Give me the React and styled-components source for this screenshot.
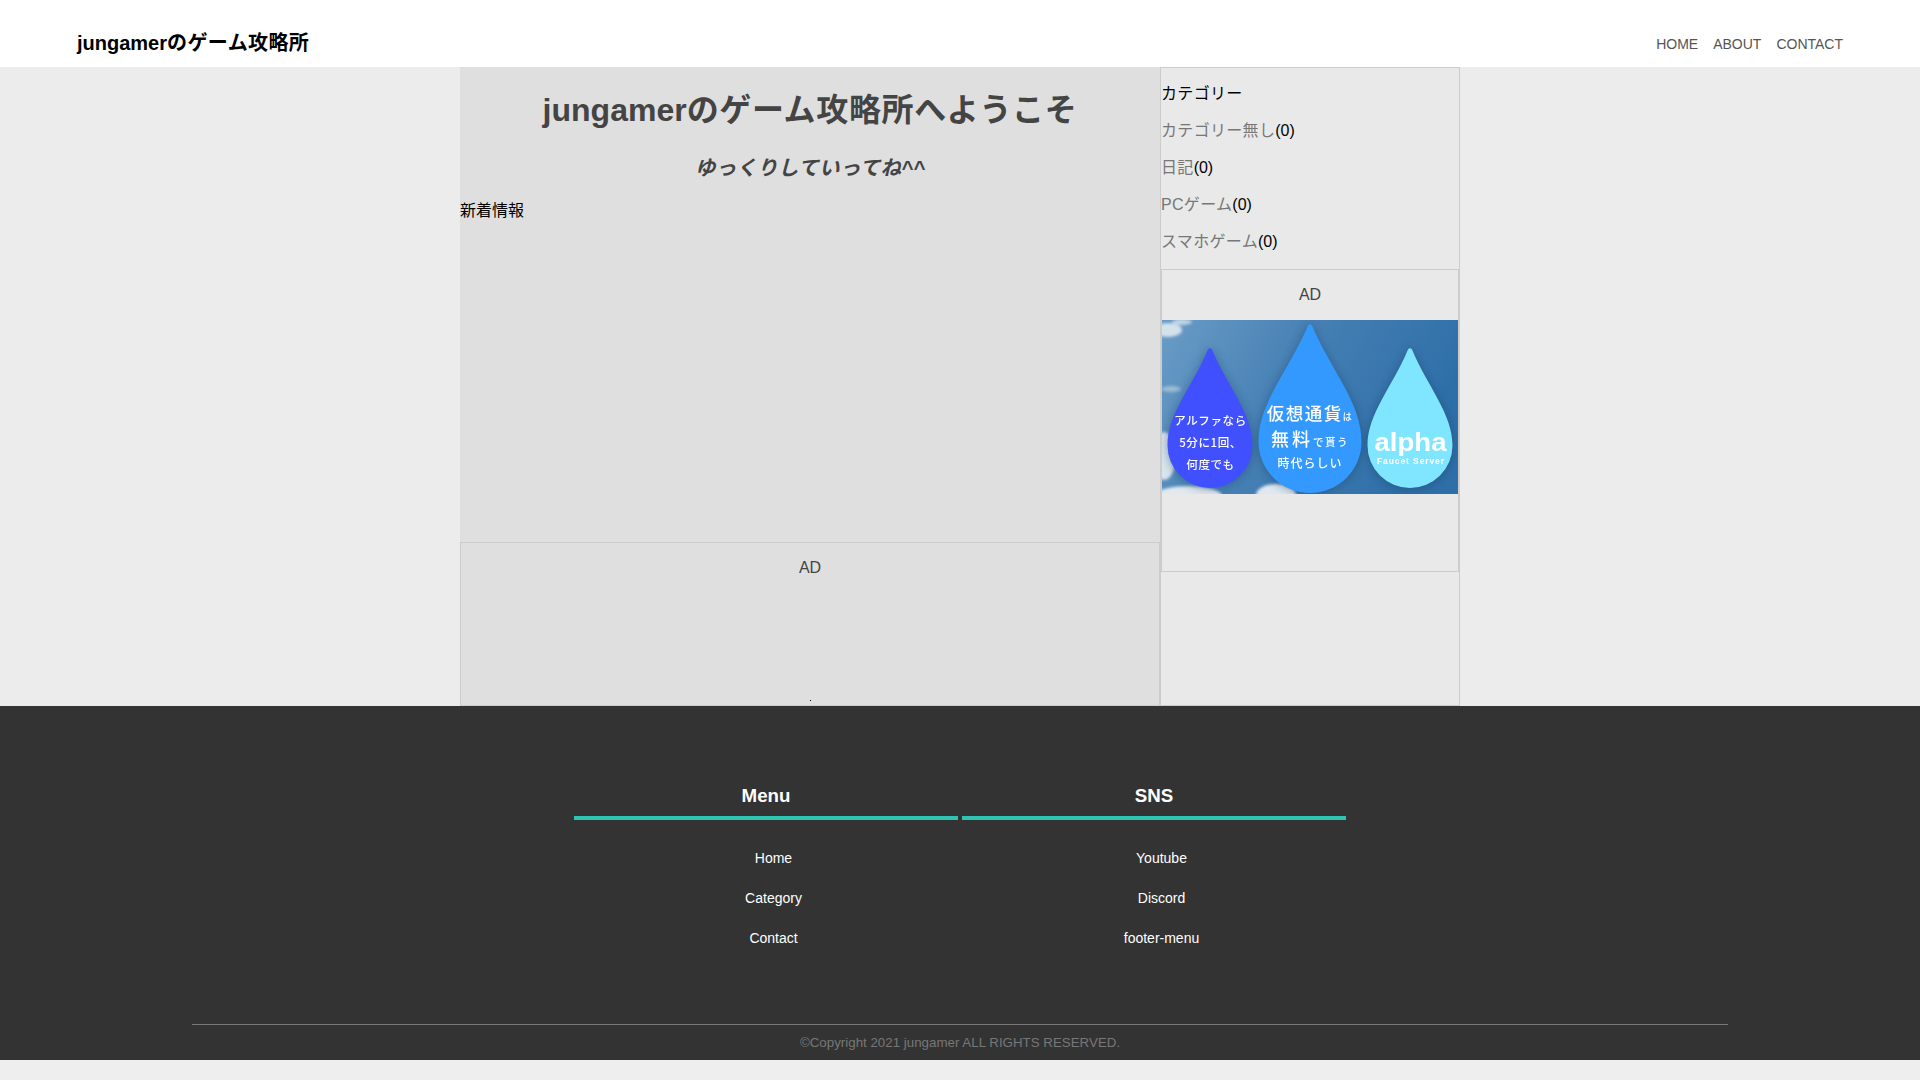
import React from 'react'
import styled, { createGlobalStyle } from 'styled-components'

const FONT = '"Liberation Sans", "Noto Sans CJK JP", sans-serif'

const categories = ['カテゴリー無し', '日記', 'PCゲーム', 'スマホゲーム']
const menuLinks = ['Home', 'Category', 'Contact']
const snsLinks = ['Youtube', 'Discord', 'footer-menu']
const navLinks = ['HOME', 'ABOUT', 'CONTACT']

// builds a water drop from the tip, the bottom and the half width
const dropPath = (cx, top, bottom, r) => {
  const mid = bottom - r
  const h = bottom - top
  return `M${cx - 2} ${top + 1.5} Q${cx} ${top - 1} ${cx + 2} ${top + 1.5}
    C${cx + r * 0.42} ${top + h * 0.28} ${cx + r} ${mid - r * 0.75} ${cx + r} ${mid}
    A${r} ${r} 0 0 1 ${cx - r} ${mid}
    C${cx - r} ${mid - r * 0.75} ${cx - r * 0.42} ${top + h * 0.28} ${cx - 2} ${top + 1.5} Z`
}

function Banner() {
  return (
    <BannerSvg viewBox="0 0 296 174" width="296" height="174">
      <defs>
        <linearGradient id="sky" x1="0" y1="0" x2="1" y2="0.3">
          <stop offset="0" stopColor="#6a9cc6" />
          <stop offset="0.5" stopColor="#457fb3" />
          <stop offset="1" stopColor="#2f6fa8" />
        </linearGradient>
        <filter id="soft" x="-30%" y="-30%" width="160%" height="160%">
          <feGaussianBlur stdDeviation="1.6" />
        </filter>
        <filter id="shadow" x="-30%" y="-30%" width="160%" height="160%">
          <feGaussianBlur stdDeviation="5" />
        </filter>
        <clipPath id="frame">
          <rect width="296" height="174" />
        </clipPath>
      </defs>
      <g clipPath="url(#frame)">
        <rect width="296" height="174" fill="url(#sky)" />
        <g fill="#e8eef2" filter="url(#soft)">
          <ellipse cx="6" cy="10" rx="14" ry="7" opacity="0.85" />
          <ellipse cx="20" cy="2" rx="10" ry="3" opacity="0.7" />
          <ellipse cx="9" cy="69" rx="10" ry="3" opacity="0.45" />
          <ellipse cx="2" cy="136" rx="12" ry="24" opacity="0.9" />
          <ellipse cx="26" cy="176" rx="34" ry="10" opacity="0.95" />
          <ellipse cx="114" cy="175" rx="20" ry="11" opacity="0.95" />
        </g>
        <g fill="#17395a" opacity="0.4" filter="url(#shadow)">
          <path d={dropPath(48, 29, 169, 43)} />
          <path d={dropPath(148, 5, 174, 52)} />
          <path d={dropPath(248, 29, 169, 43)} />
        </g>
        <path d={dropPath(48, 28, 168, 42.5)} fill="#4050ff" />
        <path d={dropPath(148, 4, 173, 51.5)} fill="#3399ff" />
        <path d={dropPath(248, 28, 168, 42.5)} fill="#80e6ff" />

        <BannerText x="48.5" y="105" fontSize="11.5" letterSpacing="0.6">アルファなら</BannerText>
        <BannerText x="48.5" y="127" fontSize="11.5" letterSpacing="0.6">5分に1回、</BannerText>
        <BannerText x="48.5" y="149" fontSize="11.5" letterSpacing="0.6">何度でも</BannerText>

        <BannerText x="148" y="99.5" fontSize="17.5" letterSpacing="1.5">
          仮想通貨<tspan fontSize="9">は</tspan>
        </BannerText>
        <BannerText x="148" y="125.5" fontSize="18" letterSpacing="3">
          無料<tspan fontSize="10.5" letterSpacing="1.5">で貰う</tspan>
        </BannerText>
        <BannerText x="148" y="147.5" fontSize="12" letterSpacing="1">時代らしい</BannerText>

        <BannerLatin x="248.5" y="131" fontSize="25" fontWeight="700" textLength="72" lengthAdjust="spacingAndGlyphs">alpha</BannerLatin>
        <BannerLatin x="249" y="144" fontSize="8.5" fontWeight="700" letterSpacing="0.9">Faucet Server</BannerLatin>
      </g>
    </BannerSvg>
  )
}

export default function App() {
  return (
    <>
      <GlobalStyle />
      <Header>
        <Logo>
          jungamer<Ja>のゲーム攻略所</Ja>
        </Logo>
        <Nav>
          {navLinks.map(link => (
            <NavLink key={link}>{link}</NavLink>
          ))}
        </Nav>
      </Header>

      <Band>
        <Content>
          <Main>
            <Title>
              jungamer<Ja>のゲーム攻略所へようこそ</Ja>
            </Title>
            <Subtitle>
              <Ja>ゆっくりしていってね</Ja>^^
            </Subtitle>
            <News>新着情報</News>
            <MainAd>
              <AdLabel>AD</AdLabel>
              <AdDot />
            </MainAd>
          </Main>

          <Aside>
            <SideRow>
              <Ja>カテゴリー</Ja>
            </SideRow>
            {categories.map(name => (
              <SideRow key={name}>
                <SideLink>{name}</SideLink>(0)
              </SideRow>
            ))}
            <SideAd>
              <AdLabel>AD</AdLabel>
              <Banner />
            </SideAd>
          </Aside>
        </Content>
      </Band>

      <Footer>
        <Columns>
          <Column>
            <ColumnTitle>Menu</ColumnTitle>
            <LinkList>
              {menuLinks.map(link => (
                <FooterLink key={link}>{link}</FooterLink>
              ))}
            </LinkList>
          </Column>
          <Column>
            <ColumnTitle>SNS</ColumnTitle>
            <LinkList>
              {snsLinks.map(link => (
                <FooterLink key={link}>{link}</FooterLink>
              ))}
            </LinkList>
          </Column>
        </Columns>
        <Copyright>©Copyright 2021 jungamer ALL RIGHTS RESERVED.</Copyright>
      </Footer>
    </>
  )
}

const GlobalStyle = createGlobalStyle`
  html, body {
    margin: 0;
    padding: 0;
    min-height: 100%;
    background: #eeeeee;
    font-family: ${FONT};
  }
`

const Ja = styled.span`
  letter-spacing: 0.02em;
  font-weight: inherit;
`

const Header = styled.header`
  height: 67px;
  box-sizing: border-box;
  padding: 0 77px 12px;
  background: #ffffff;
  display: flex;
  justify-content: space-between;
  align-items: flex-end;
`

const Logo = styled.div`
  font-size: 20px;
  line-height: 24px;
  font-weight: 700;
  color: #000000;
`

const Nav = styled.nav`
  display: flex;
  gap: 15px;
  margin-bottom: 1px;
`

const NavLink = styled.a`
  font-size: 14px;
  line-height: 20px;
  color: #555555;
`

const Band = styled.div`
  background: #ececec;
`

const Content = styled.div`
  width: 1000px;
  height: 639px;
  margin: 0 auto;
  display: flex;
`

const Main = styled.main`
  width: 700px;
  background: #dfdfdf;
  display: flex;
  flex-direction: column;
`

const Title = styled.h1`
  margin: 25px 0 0;
  font-size: 32px;
  line-height: 36px;
  font-weight: 700;
  color: #444444;
  text-align: center;
`

const Subtitle = styled.h2`
  margin: 28px 0 0;
  font-size: 20.4px;
  line-height: 24px;
  font-weight: 700;
  font-style: italic;
  color: #444444;
  text-align: center;
`

const News = styled.p`
  margin: 19px 0 0;
  font-size: 16px;
  line-height: 24px;
  color: #000000;
`

const MainAd = styled.div`
  margin-top: auto;
  height: 164px;
  box-sizing: border-box;
  padding-top: 13px;
  border: 1px solid #cccccc;
  position: relative;
`

const AdLabel = styled.div`
  font-size: 16px;
  line-height: 24px;
  color: #444444;
  text-align: center;
`

const AdDot = styled.span`
  position: absolute;
  left: 349px;
  bottom: 4px;
  width: 1px;
  height: 1px;
  background: #000000;
`

const Aside = styled.aside`
  width: 300px;
  box-sizing: border-box;
  padding-top: 7px;
  background: #e9e9e9;
  border: 1px solid #cccccc;
`

const SideRow = styled.div`
  font-size: 16px;
  line-height: 37px;
  color: #000000;
`

const SideLink = styled.a`
  color: #777777;
  letter-spacing: 0.02em;
`

const SideAd = styled.div`
  height: 303px;
  box-sizing: border-box;
  margin-top: 9px;
  padding-top: 13px;
  border: 1px solid #cccccc;
`

const BannerSvg = styled.svg`
  display: block;
  margin-top: 13px;
`

const BannerText = styled.text`
  font-family: "Noto Sans CJK JP", sans-serif;
  font-weight: 500;
  fill: #ffffff;
  text-anchor: middle;
`

const BannerLatin = styled.text`
  font-family: "Liberation Sans", sans-serif;
  fill: #ffffff;
  text-anchor: middle;
`

const Footer = styled.footer`
  height: 354px;
  box-sizing: border-box;
  padding-top: 78px;
  background: #333333;
`

const Columns = styled.div`
  display: flex;
  justify-content: center;
  gap: 4px;
`

const Column = styled.section`
  width: 384px;
`

const ColumnTitle = styled.h3`
  margin: 0;
  padding-bottom: 8px;
  font-size: 18.72px;
  line-height: 24px;
  font-weight: 700;
  color: #ffffff;
  text-align: center;
  border-bottom: 4px solid #2fc4b2;
`

const LinkList = styled.ul`
  list-style: none;
  margin: 18px 0 0;
  padding: 0 0 0 15px;
`

const FooterLink = styled.li`
  font-size: 14px;
  line-height: 40px;
  color: #ffffff;
  text-align: center;
`

const Copyright = styled.div`
  width: 1536px;
  box-sizing: border-box;
  margin: 66px auto 0;
  padding-top: 8px;
  border-top: 1px solid #777777;
  font-size: 13.33px;
  line-height: 20px;
  color: #777777;
  text-align: center;
`
